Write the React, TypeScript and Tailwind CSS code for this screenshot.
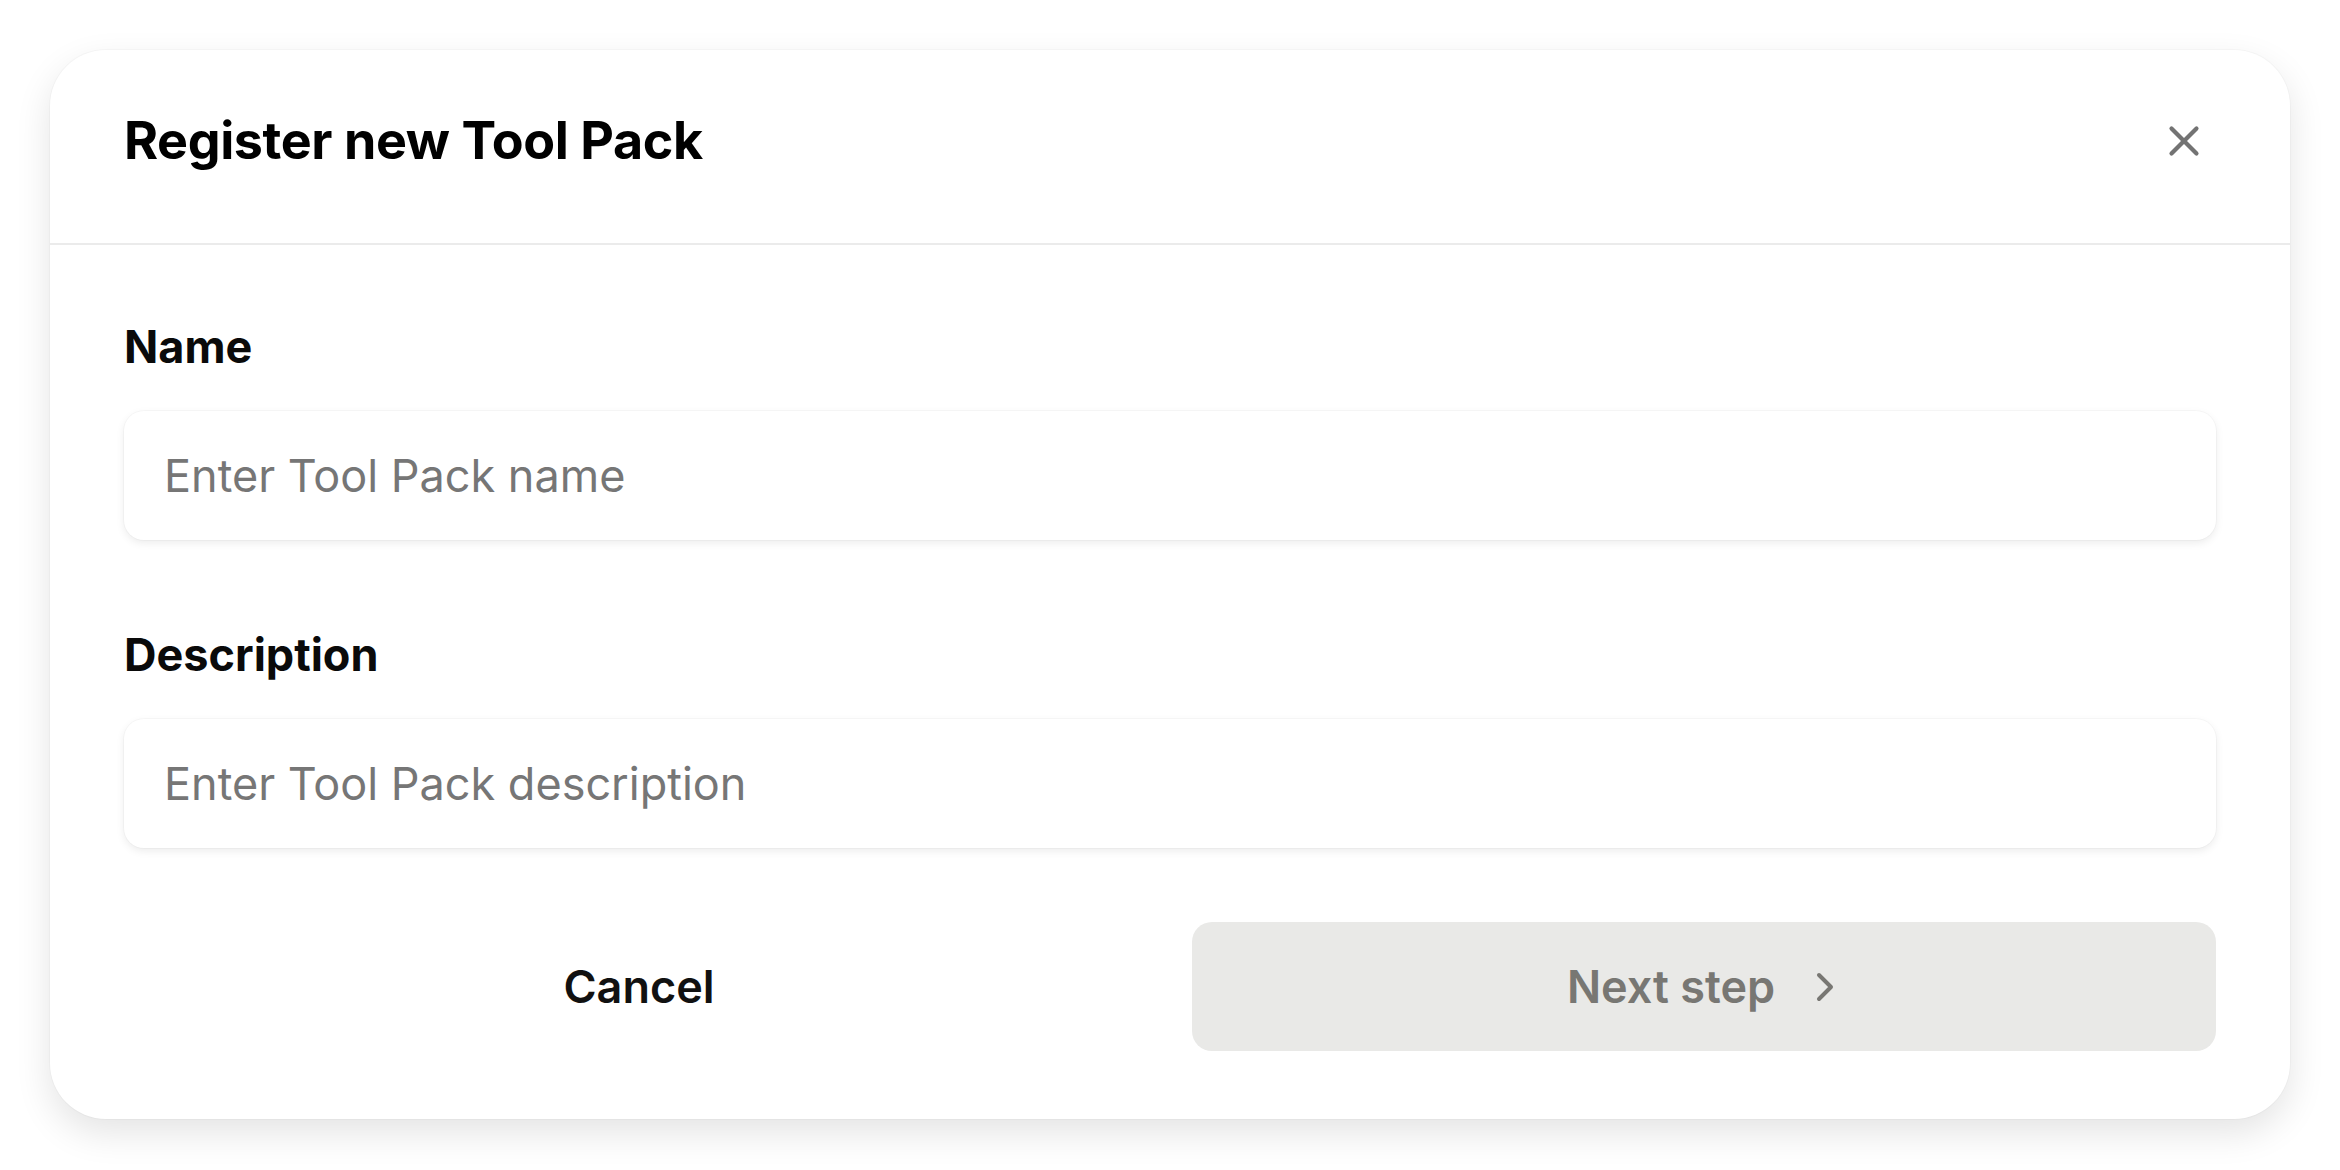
import React from 'react';
import { X, ChevronRight } from 'lucide-react';

interface FieldProps {
  label: string;
  placeholder: string;
}

const Field: React.FC<FieldProps> = ({ label, placeholder }) => (
  <div className="flex flex-col gap-[36px]">
    <label className="text-[45px] leading-[56px] font-bold text-[#0a0a0a]">{label}</label>
    <div className="h-[129px] flex items-center px-[40px] bg-white rounded-[20px] shadow-[0_3px_8px_rgba(0,0,0,0.08),0_0_0_1px_rgba(0,0,0,0.025)]">
      <span className="text-[45px] leading-[56px] text-[#767676]">{placeholder}</span>
    </div>
  </div>
);

export default function App() {
  return (
    <div className="w-full min-h-screen bg-white p-[50px] font-['Inter',_'Liberation_Sans',_sans-serif]">
      <div className="w-full bg-white rounded-[56px] shadow-[0_14px_36px_rgba(0,0,0,0.11),0_0_0_1px_rgba(0,0,0,0.025)] flex flex-col">
        {/* Header */}
        <div className="flex items-center justify-between px-[74px] pt-[59px] pb-[70px] border-b-2 border-[#ebebeb]">
          <h1 className="text-[52px] leading-[64px] font-bold tracking-[-0.4px] text-black">Register new Tool Pack</h1>
          <button className="w-16 h-16 flex items-center justify-center text-[#737373]">
            <X size={50} strokeWidth={2} />
          </button>
        </div>

        {/* Form */}
        <div className="flex flex-col px-[74px] pt-[74px] pb-[68px]">
          <div className="flex flex-col gap-[87px]">
            <Field label="Name" placeholder="Enter Tool Pack name" />
            <Field label="Description" placeholder="Enter Tool Pack description" />
          </div>

          <div className="grid grid-cols-2 gap-[44px] mt-[74px]">
            <button className="h-[129px] rounded-[20px] flex items-center justify-center pl-[6px] text-[45px] font-semibold text-[#111111]">
              Cancel
            </button>
            <button className="h-[129px] rounded-[20px] bg-[#e9e9e7] flex items-center justify-center gap-[26px] pl-[8px] text-[45px] font-semibold text-[#787773]">
              <span>Next step</span>
              <ChevronRight size={48} strokeWidth={2} />
            </button>
          </div>
        </div>
      </div>
    </div>
  );
}
